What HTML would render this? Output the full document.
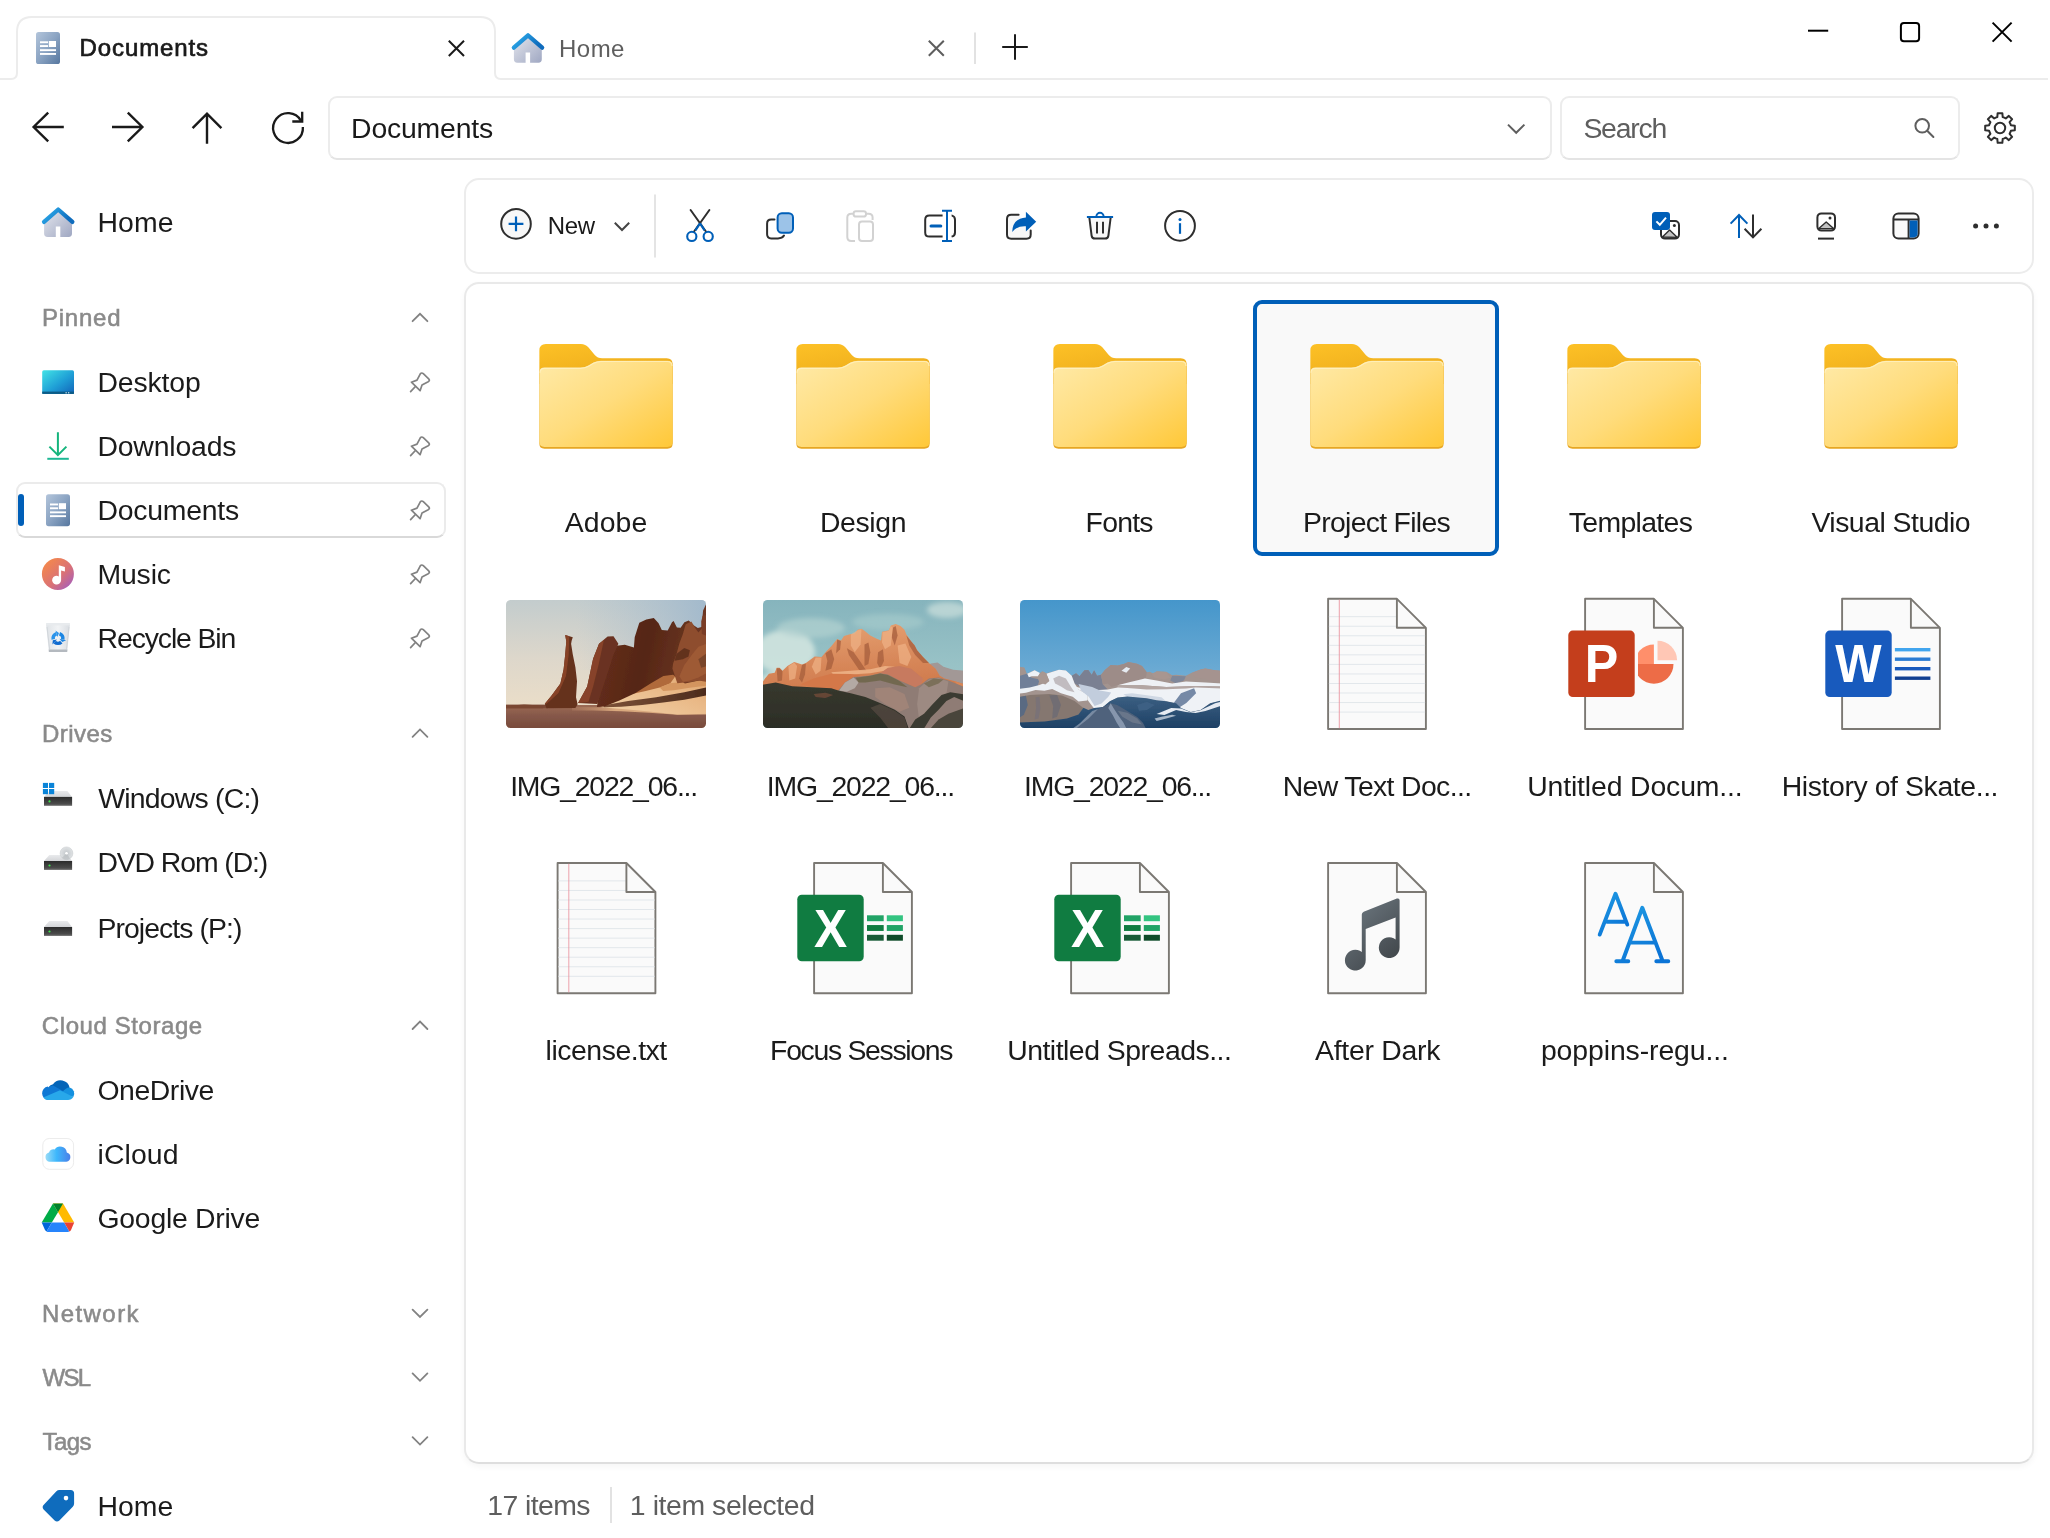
<!DOCTYPE html>
<html lang="en"><head><meta charset="utf-8"><title>Files - Documents</title>
<style>
html,body{margin:0;padding:0;background:#fff;}
body{width:2050px;height:1538px;position:relative;overflow:hidden;font-family:"Liberation Sans", Arial, sans-serif;}
.t{position:absolute;line-height:40px;height:40px;white-space:nowrap;}
.b{position:absolute;box-sizing:border-box;}
svg.ov{position:absolute;left:0;top:0;pointer-events:none;}
</style></head>
<body>
<div class="b" style="left:328px;top:96px;width:1224px;height:64px;border:2px solid #ececec;border-radius:9px;background:#fff;border-bottom-color:#e4e4e4"></div>
<div class="b" style="left:1560px;top:96px;width:400px;height:64px;border:2px solid #ececec;border-radius:9px;background:#fff;border-bottom-color:#e4e4e4"></div>
<div class="b" style="left:464px;top:178px;width:1570px;height:96px;border:2px solid #ececec;border-radius:15px;background:#fff"></div>
<div class="b" style="left:464px;top:282px;width:1570px;height:1182px;border:2px solid #e9e9e9;border-bottom-color:#dedede;border-radius:15px;background:#fff;box-shadow:0 3px 6px rgba(0,0,0,0.04)"></div>
<div class="b" style="left:610px;top:1487px;width:2px;height:36px;background:#e2e2e2"></div>
<div class="b" style="left:16px;top:482px;width:430px;height:56px;border:2px solid #ebebeb;border-bottom-color:#d9d9d9;border-radius:9px;background:#fff"></div>
<div class="b" style="left:18px;top:494px;width:6px;height:32px;border-radius:3px;background:#005fb8"></div>
<div class="b" style="left:1253px;top:300px;width:246px;height:256px;border:4px solid #005fb8;border-radius:9px;background:#f9f9f9"></div>
<svg class="ov" width="2050" height="1538" viewBox="0 0 2050 1538">
<defs>
<linearGradient id="gdoc" x1="0" y1="0" x2="1" y2="1"><stop offset="0" stop-color="#b3c5db"/><stop offset="0.5" stop-color="#8aa3c2"/><stop offset="1" stop-color="#56779f"/></linearGradient>
<linearGradient id="ghroof" x1="0" y1="0" x2="1" y2="0.4"><stop offset="0" stop-color="#2fb0ee"/><stop offset="1" stop-color="#0f6cbd"/></linearGradient>
<linearGradient id="ghbody" x1="0" y1="0" x2="1" y2="1"><stop offset="0" stop-color="#e6e8ee"/><stop offset="1" stop-color="#9fa7c2"/></linearGradient>
<linearGradient id="gdesk" x1="0" y1="0" x2="1" y2="1"><stop offset="0" stop-color="#41e3e6"/><stop offset="0.55" stop-color="#1f9fd6"/><stop offset="1" stop-color="#1263b8"/></linearGradient>
<linearGradient id="gdl" x1="0" y1="0" x2="0" y2="1"><stop offset="0" stop-color="#12b36f"/><stop offset="1" stop-color="#1fb9a0"/></linearGradient>
<linearGradient id="gmus" x1="0.1" y1="0.1" x2="0.9" y2="0.9"><stop offset="0" stop-color="#f5894a"/><stop offset="0.6" stop-color="#d97177"/><stop offset="1" stop-color="#a85fb8"/></linearGradient>
<linearGradient id="gbin" x1="0" y1="0" x2="1" y2="0"><stop offset="0" stop-color="#dfe3e7"/><stop offset="0.5" stop-color="#f1f3f5"/><stop offset="1" stop-color="#d9dde2"/></linearGradient>
<linearGradient id="gdrvf" x1="0" y1="0" x2="0" y2="1"><stop offset="0" stop-color="#2b2b2b"/><stop offset="0.75" stop-color="#4a4a4a"/><stop offset="1" stop-color="#6a6a6a"/></linearGradient>
<linearGradient id="gdrvt" x1="0" y1="0" x2="0" y2="1"><stop offset="0" stop-color="#e9eaec"/><stop offset="1" stop-color="#d3d5d8"/></linearGradient>
<radialGradient id="gdisc"><stop offset="0.12" stop-color="#fff"/><stop offset="0.2" stop-color="#c9cdd0"/><stop offset="1" stop-color="#dfe2e4"/></radialGradient>
<linearGradient id="gicl" x1="0" y1="0.5" x2="1" y2="0.5"><stop offset="0" stop-color="#9adcf7"/><stop offset="0.45" stop-color="#3db7fc"/><stop offset="1" stop-color="#4a7fe8"/></linearGradient>
<linearGradient id="gfb" x1="0" y1="0" x2="0.6" y2="1"><stop offset="0" stop-color="#fdc126"/><stop offset="1" stop-color="#eba91a"/></linearGradient>
<linearGradient id="gff" x1="0" y1="0" x2="1" y2="1"><stop offset="0" stop-color="#ffeaa8"/><stop offset="0.5" stop-color="#ffdc7c"/><stop offset="1" stop-color="#ffc838"/></linearGradient>
<linearGradient id="gfs" x1="0" y1="0" x2="0" y2="1"><stop offset="0" stop-color="#d99a14" stop-opacity="0"/><stop offset="1" stop-color="#d2900e" stop-opacity="0.55"/></linearGradient>
<linearGradient id="gnote" x1="0.2" y1="0" x2="0.9" y2="1"><stop offset="0" stop-color="#6d7880"/><stop offset="1" stop-color="#3d4246"/></linearGradient>
<linearGradient id="gfont" x1="0" y1="0" x2="0.6" y2="1"><stop offset="0" stop-color="#1f9be3"/><stop offset="1" stop-color="#0b74d6"/></linearGradient>
<filter id="bl1" x="-10%" y="-10%" width="120%" height="120%"><feGaussianBlur stdDeviation="0.6"/></filter>
<filter id="bl2" x="-20%" y="-20%" width="140%" height="140%"><feGaussianBlur stdDeviation="2.5"/></filter>
<linearGradient id="p1sky" x1="0" y1="0" x2="0" y2="1"><stop offset="0" stop-color="#c3cccd"/><stop offset="0.45" stop-color="#ddd7cb"/><stop offset="1" stop-color="#f0e0c7"/></linearGradient>
<linearGradient id="p1sky2" x1="0" y1="0" x2="1" y2="0"><stop offset="0.35" stop-color="#a9bfd0" stop-opacity="0"/><stop offset="1" stop-color="#9ab5cc" stop-opacity="0.8"/></linearGradient>
<linearGradient id="p1gr" x1="0" y1="0" x2="0" y2="1"><stop offset="0" stop-color="#9c6b54"/><stop offset="0.4" stop-color="#86584a"/><stop offset="1" stop-color="#754838"/></linearGradient>
<linearGradient id="p1rock" x1="0" y1="0" x2="1" y2="0.2"><stop offset="0" stop-color="#6a311d"/><stop offset="0.5" stop-color="#552616"/><stop offset="1" stop-color="#6e3822"/></linearGradient>
<linearGradient id="p1sand" x1="0" y1="1" x2="1" y2="0"><stop offset="0" stop-color="#f2d3aa"/><stop offset="0.6" stop-color="#e9b886"/><stop offset="1" stop-color="#d99b63"/></linearGradient>
<linearGradient id="p1shadow" x1="0" y1="0" x2="1" y2="0"><stop offset="0" stop-color="#7d5238"/><stop offset="1" stop-color="#4a2a1c"/></linearGradient>
<filter id="nz1" x="0" y="0" width="100%" height="100%"><feTurbulence type="fractalNoise" baseFrequency="0.9" numOctaves="2" seed="3" result="n"/><feColorMatrix in="n" type="matrix" values="0 0 0 0 0.25  0 0 0 0 0.12  0 0 0 0 0.08  0 0 0 1.4 -0.55"/><feComposite operator="in" in2="SourceGraphic"/></filter>
<linearGradient id="p1strip" gradientUnits="userSpaceOnUse" x1="60" y1="0" x2="110" y2="0"><stop offset="0" stop-color="#b88466" stop-opacity="0.2"/><stop offset="1" stop-color="#d9a97e"/></linearGradient>
<clipPath id="cph1"><rect x="0" y="0" width="200" height="128" rx="4.5"/></clipPath>
<linearGradient id="p2sky" x1="0" y1="0" x2="0" y2="1"><stop offset="0" stop-color="#86b4bd"/><stop offset="0.5" stop-color="#98c2c6"/><stop offset="1" stop-color="#a4cacb"/></linearGradient>
<linearGradient id="p2mt" x1="0" y1="0" x2="0.2" y2="1"><stop offset="0" stop-color="#e6a272"/><stop offset="0.55" stop-color="#d98a5c"/><stop offset="1" stop-color="#cf7a4c"/></linearGradient>
<linearGradient id="p2for" x1="0" y1="0" x2="0" y2="1"><stop offset="0" stop-color="#38392e"/><stop offset="1" stop-color="#2b2c26"/></linearGradient>
<clipPath id="cph2"><rect x="0" y="0" width="200" height="128" rx="4.5"/></clipPath>
<linearGradient id="p3sky" x1="0" y1="0" x2="0" y2="1"><stop offset="0" stop-color="#4596cb"/><stop offset="0.55" stop-color="#6baad3"/><stop offset="1" stop-color="#8fc0dc"/></linearGradient>
<linearGradient id="p3low" x1="0" y1="0" x2="0" y2="1"><stop offset="0" stop-color="#3b5f82"/><stop offset="1" stop-color="#1c3f63"/></linearGradient>
<clipPath id="cph3"><rect x="0" y="0" width="200" height="128" rx="4.5"/></clipPath>
</defs>
<path d="M0,79 H11 Q17,79 17,73 V32 Q17,17 32,17 H480 Q495,17 495,32 V73 Q495,79 501,79 H2048" fill="none" stroke="#ececec" stroke-width="2"/>
<g transform="translate(36,32)"><rect x="0" y="0" width="24" height="32" rx="2.6" fill="url(#gdoc)"/><rect x="4" y="9.3" width="8" height="1.9" fill="#fff"/><rect x="4" y="13.1" width="8" height="1.9" fill="#fff"/><rect x="12.8" y="9" width="7.2" height="6" fill="#fff"/><rect x="4" y="17.2" width="16" height="1.9" fill="#fff"/><rect x="4" y="21" width="16" height="1.9" fill="#fff"/></g>
<path d="M448.8,40.8 L464,56 M464,40.8 L448.8,56" stroke="#1a1a1a" stroke-width="2" fill="none"/>
<g transform="translate(512,32.3) scale(1.0)"><path d="M1.9,14 L16,2.6 L29.8,14 V27 Q29.8,30.4 26.4,30.4 H18.1 V20.1 H13.6 V30.4 H5.3 Q1.9,30.4 1.9,27 Z" fill="url(#ghbody)"/><path d="M1.8,15.4 L16,3 L30.2,15.4" fill="none" stroke="url(#ghroof)" stroke-width="4.2" stroke-linecap="round" stroke-linejoin="round"/></g>
<path d="M928.8,40.8 L943.8,55.8 M943.8,40.8 L928.8,55.8" stroke="#5e5e5e" stroke-width="2" fill="none"/>
<rect x="974" y="32.5" width="2" height="31.5" fill="#e2e2e2"/>
<path d="M1002.2,47 H1027.8 M1015,34.2 V59.8" stroke="#1a1a1a" stroke-width="2" fill="none"/>
<path d="M1808,30.7 H1828.2" stroke="#000" stroke-width="2"/>
<rect x="1900.9" y="23" width="18.2" height="18.2" rx="3" fill="none" stroke="#000" stroke-width="2"/>
<path d="M1992.6,22.6 L2011.6,41.6 M2011.6,22.6 L1992.6,41.6" stroke="#000" stroke-width="2" fill="none"/>
<path d="M63.8,127 H33.8 M48.2,112.6 L33.6,127 L48.2,141.4" fill="none" stroke="#1a1a1a" stroke-width="2.4"/>
<path d="M112,127 H142.2 M127.8,112.6 L142.4,127 L127.8,141.4" fill="none" stroke="#1a1a1a" stroke-width="2.4"/>
<path d="M207,143.8 V113.8 M192.6,128.2 L207,113.6 L221.4,128.2" fill="none" stroke="#1a1a1a" stroke-width="2.4"/>
<path d="M302.86,126.96 A14.9,14.9 0 1 1 300.90,120.55" fill="none" stroke="#1a1a1a" stroke-width="2.3"/>
<path d="M302.2,111.8 V121.5 H292.3" fill="none" stroke="#1a1a1a" stroke-width="2.3"/>
<path d="M1508,124.6 L1516.2,132.8 L1524.4,124.6" fill="none" stroke="#5e5e5e" stroke-width="2"/>
<circle cx="1922.2" cy="125.8" r="6.8" fill="none" stroke="#5e5e5e" stroke-width="2"/><path d="M1927.2,130.8 L1933.4,137" stroke="#5e5e5e" stroke-width="2" stroke-linecap="round"/>
<polygon points="1995.71,117.65 1997.29,117.13 1997.65,113.18 2002.35,113.18 2002.71,117.13 2004.29,117.65 2005.77,118.40 2008.82,115.86 2012.14,119.18 2009.60,122.23 2010.35,123.71 2010.87,125.29 2014.82,125.65 2014.82,130.35 2010.87,130.71 2010.35,132.29 2009.60,133.77 2012.14,136.82 2008.82,140.14 2005.77,137.60 2004.29,138.35 2002.71,138.87 2002.35,142.82 1997.65,142.82 1997.29,138.87 1995.71,138.35 1994.23,137.60 1991.18,140.14 1987.86,136.82 1990.40,133.77 1989.65,132.29 1989.13,130.71 1985.18,130.35 1985.18,125.65 1989.13,125.29 1989.65,123.71 1990.40,122.23 1987.86,119.18 1991.18,115.86 1994.23,118.40" fill="none" stroke="#2e2e2e" stroke-width="2" stroke-linejoin="round"/>
<circle cx="2000" cy="128" r="5.2" fill="none" stroke="#2e2e2e" stroke-width="2"/>
<g transform="translate(42.2,206.5) scale(1.0)"><path d="M1.9,14 L16,2.6 L29.8,14 V27 Q29.8,30.4 26.4,30.4 H18.1 V20.1 H13.6 V30.4 H5.3 Q1.9,30.4 1.9,27 Z" fill="url(#ghbody)"/><path d="M1.8,15.4 L16,3 L30.2,15.4" fill="none" stroke="url(#ghroof)" stroke-width="4.2" stroke-linecap="round" stroke-linejoin="round"/></g>
<path d="M412.6,321.2 L420,313.8 L427.4,321.2" fill="none" stroke="#828282" stroke-width="1.8" stroke-linecap="round"/>
<rect x="42.2" y="370.3" width="31.8" height="23.6" rx="1.6" fill="url(#gdesk)"/><rect x="42.2" y="391.6" width="31.8" height="2.3" fill="#0d5b86"/><rect x="65.5" y="392.2" width="1.3" height="1.2" fill="#cfe8f5"/><rect x="68" y="392.2" width="1.3" height="1.2" fill="#cfe8f5"/>
<g transform="translate(410,372.3)" fill="none" stroke="#828282" stroke-width="1.7" stroke-linejoin="round" stroke-linecap="round"><path d="M10.3,1.6 Q11.7,-0.1 13.3,1.4 L18.7,6.6 Q20.3,8.3 18.2,9.5 L12,12.6 L10.1,18.4 L1.4,9.9 L7,7.8 Z"/><path d="M5.4,14.2 L0.6,19.4"/></g>
<path d="M57.9,432.2 V455 M49.4,446.6 L57.9,455.1 L66.4,446.6" fill="none" stroke="#14b47c" stroke-width="2"/><path d="M47.3,458.8 H68.8" stroke="#1db894" stroke-width="2"/>
<g transform="translate(410,436.3)" fill="none" stroke="#828282" stroke-width="1.7" stroke-linejoin="round" stroke-linecap="round"><path d="M10.3,1.6 Q11.7,-0.1 13.3,1.4 L18.7,6.6 Q20.3,8.3 18.2,9.5 L12,12.6 L10.1,18.4 L1.4,9.9 L7,7.8 Z"/><path d="M5.4,14.2 L0.6,19.4"/></g>
<g transform="translate(46,494.2)"><rect x="0" y="0" width="24" height="32" rx="2.6" fill="url(#gdoc)"/><rect x="4" y="9.3" width="8" height="1.9" fill="#fff"/><rect x="4" y="13.1" width="8" height="1.9" fill="#fff"/><rect x="12.8" y="9" width="7.2" height="6" fill="#fff"/><rect x="4" y="17.2" width="16" height="1.9" fill="#fff"/><rect x="4" y="21" width="16" height="1.9" fill="#fff"/></g>
<g transform="translate(410,500.3)" fill="none" stroke="#828282" stroke-width="1.7" stroke-linejoin="round" stroke-linecap="round"><path d="M10.3,1.6 Q11.7,-0.1 13.3,1.4 L18.7,6.6 Q20.3,8.3 18.2,9.5 L12,12.6 L10.1,18.4 L1.4,9.9 L7,7.8 Z"/><path d="M5.4,14.2 L0.6,19.4"/></g>
<circle cx="57.9" cy="574" r="16" fill="url(#gmus)"/><path d="M58.8,565.2 L64.9,567 V571.6 L61.1,570.5 V580.2 A4.5,4.3 0 1 1 58.8,576.4 Z" fill="#fff"/>
<g transform="translate(410,564.3)" fill="none" stroke="#828282" stroke-width="1.7" stroke-linejoin="round" stroke-linecap="round"><path d="M10.3,1.6 Q11.7,-0.1 13.3,1.4 L18.7,6.6 Q20.3,8.3 18.2,9.5 L12,12.6 L10.1,18.4 L1.4,9.9 L7,7.8 Z"/><path d="M5.4,14.2 L0.6,19.4"/></g>
<path d="M46.1,624.4 H69.9 L67.2,651.8 H48.9 Z" fill="url(#gbin)"/><path d="M46.1,623 H69.9 V625.4 H46.1 Z" fill="#e8ebee"/><path d="M48.7,649.4 H67.4 L67.2,651.9 H48.9 Z" fill="#b4b9bf"/><path d="M47,627 L49.6,649 M69,627 L66.5,649" stroke="#cdd2d7" stroke-width="0.8" fill="none"/>
<path d="M59.51,633.74 A4.9,4.9 0 0 1 62.79,639.42" fill="none" stroke="#1b86e3" stroke-width="3.6"/><polygon points="62.25,641.96 66.12,640.13 59.47,638.71" fill="#1b86e3"/><path d="M61.28,642.04 A4.9,4.9 0 0 1 54.72,642.04" fill="none" stroke="#0f6bd0" stroke-width="3.6"/><polygon points="52.79,640.30 52.45,644.57 57.00,639.51" fill="#0f6bd0"/><path d="M53.21,639.42 A4.9,4.9 0 0 1 56.49,633.74" fill="none" stroke="#2a93ea" stroke-width="3.6"/><polygon points="58.96,632.94 55.44,630.51 57.54,636.97" fill="#2a93ea"/>
<g transform="translate(410,628.3)" fill="none" stroke="#828282" stroke-width="1.7" stroke-linejoin="round" stroke-linecap="round"><path d="M10.3,1.6 Q11.7,-0.1 13.3,1.4 L18.7,6.6 Q20.3,8.3 18.2,9.5 L12,12.6 L10.1,18.4 L1.4,9.9 L7,7.8 Z"/><path d="M5.4,14.2 L0.6,19.4"/></g>
<path d="M412.6,736.8 L420,729.4 L427.4,736.8" fill="none" stroke="#828282" stroke-width="1.8" stroke-linecap="round"/>
<path d="M49.3,791.0 H67.4 L72.1,796.9 H44 Z" fill="url(#gdrvt)"/><rect x="44" y="796.9" width="28.1" height="8.9" fill="url(#gdrvf)"/><circle cx="49.5" cy="801.4" r="1.1" fill="#3ee04a"/>
<g fill="#0a84d8"><rect x="42.9" y="782.9" width="5.1" height="5.1"/><rect x="49" y="782.9" width="5.2" height="5.1"/><rect x="42.9" y="789" width="5.1" height="5.2"/><rect x="49" y="789" width="5.2" height="5.2"/></g>
<path d="M49.3,855.1 H67.4 L72.1,861 H44 Z" fill="url(#gdrvt)"/><rect x="44" y="861" width="28.1" height="8.9" fill="url(#gdrvf)"/><circle cx="49.5" cy="865.5" r="1.1" fill="#3ee04a"/>
<circle cx="66.5" cy="853.3" r="6.4" fill="url(#gdisc)" stroke="#c4c8cb" stroke-width="0.5"/><path d="M66.5,853.3 L70,858.6 A6.4,6.4 0 0 1 62,857.8 Z" fill="#b9bdc0" opacity="0.7"/><circle cx="66.5" cy="853.3" r="1.3" fill="#fff"/>
<path d="M49.3,921.1 H67.4 L72.1,927 H44 Z" fill="url(#gdrvt)"/><rect x="44" y="927" width="28.1" height="8.9" fill="url(#gdrvf)"/><circle cx="49.5" cy="931.5" r="1.1" fill="#3ee04a"/>
<path d="M412.6,1029.0 L420,1021.6 L427.4,1029.0" fill="none" stroke="#828282" stroke-width="1.8" stroke-linecap="round"/>
<g><path d="M53,1084.2 A9.3,9.3 0 0 1 69.6,1087.6 L60,1093.5 L48.6,1087.2 A7,7 0 0 1 53,1084.2 Z" fill="#0364b8"/><path d="M48.6,1087.2 A7.2,7.2 0 0 1 53.2,1085.6 L66.5,1093 L52.5,1100 H48.5 A6.8,6.8 0 0 1 47.8,1086.5 Z" fill="#0f78d4"/><path d="M69.6,1087.6 A6.3,6.3 0 0 1 73.3,1097 L60,1093.5 L66.2,1088.4 A6,6 0 0 1 69.6,1087.6 Z" fill="#1490df"/><path d="M73.3,1097 A6.2,6.2 0 0 1 68,1100 H48.5 A6.8,6.8 0 0 1 43.2,1097.4 L60,1090.2 Z" fill="#28a8ea"/></g>
<rect x="42.8" y="1138.5" width="30.8" height="30.8" rx="6.5" fill="#fff" stroke="#ececec" stroke-width="1"/><path d="M49.8,1161.8 A4.8,4.8 0 0 1 49,1152.4 A4.4,4.4 0 0 1 54.6,1149.6 A6.6,6.6 0 0 1 66.8,1152.6 A4.7,4.7 0 0 1 66.4,1161.8 Z" fill="url(#gicl)"/>
<g><path d="M53,1203.6 H63 L74.2,1222.6 H64.2 Z" fill="#ffba00"/><path d="M53,1203.6 L58,1212.2 L51.8,1222.6 H41.7 Z" fill="#00ac47"/><path d="M53,1203.6 H63 L58,1212.2 Z" fill="#00832d"/><path d="M41.7,1222.6 H51.8 L46.6,1231.4 Q45.6,1231 45,1230 Z" fill="#0066da"/><path d="M51.8,1222.6 H64.2 L69.4,1231.6 Q68.6,1232 67.6,1232 H48.4 Q47.4,1232 46.6,1231.4 Z" fill="#2684fc"/><path d="M64.2,1222.6 H74.2 L71,1230 Q70.4,1231 69.4,1231.6 Z" fill="#ea4335"/></g>
<path d="M412.6,1309.6 L420,1317.0 L427.4,1309.6" fill="none" stroke="#828282" stroke-width="1.8" stroke-linecap="round"/>
<path d="M412.6,1373.4 L420,1380.8 L427.4,1373.4" fill="none" stroke="#828282" stroke-width="1.8" stroke-linecap="round"/>
<path d="M412.6,1437.2 L420,1444.6 L427.4,1437.2" fill="none" stroke="#828282" stroke-width="1.8" stroke-linecap="round"/>
<path d="M59.4,1490 H70.6 Q74.1,1490 74.1,1493.5 V1503.6 Q74.1,1505.4 72.8,1506.7 L59.4,1520.4 Q57,1522.6 54.6,1520.4 L43.6,1509.4 Q41.6,1507 43.8,1504.8 L56.4,1491.3 Q57.6,1490 59.4,1490 Z" fill="#0f6cbd"/><circle cx="66" cy="1498.1" r="2.3" fill="#fff"/>
<circle cx="516" cy="223.9" r="14.8" fill="#f8f8f8" stroke="#2e2e2e" stroke-width="2"/><path d="M508.6,223.9 H523.4 M516,216.5 V231.3" stroke="#005fb8" stroke-width="2.2" fill="none"/>
<path d="M614.8,222.8 L622,230 L629.2,222.8" fill="none" stroke="#444" stroke-width="2"/>
<rect x="654" y="194.5" width="2" height="63" fill="#e4e4e4"/>
<path d="M690.6,210 L707,233 M709.4,210 L693,233" stroke="#2e2e2e" stroke-width="2" fill="none" stroke-linecap="round"/><path d="M700,223.4 L704.6,230.4 M700,223.4 L695.4,230.4" stroke="#005fb8" stroke-width="2.2" fill="none"/><circle cx="691.8" cy="236.4" r="4.6" fill="#fff" stroke="#005fb8" stroke-width="2.1"/><circle cx="708.2" cy="236.4" r="4.6" fill="#fff" stroke="#005fb8" stroke-width="2.1"/>
<path d="M774.5,219.6 H771.2 Q767.1,219.6 767.1,223.7 V234.3 Q767.1,238.4 771.2,238.4 H778 Q782.4,238.4 784,235.6" fill="none" stroke="#2e2e2e" stroke-width="2" stroke-linecap="round"/><rect x="777.6" y="213.3" width="15.4" height="19.4" rx="4.2" fill="#9cc3e8" stroke="#005fb8" stroke-width="2"/>
<g fill="none" stroke="#d2d2d2" stroke-width="2" stroke-linejoin="round"><path d="M855,241 H851.3 Q847.3,241 847.3,237 V217.6 Q847.3,213.8 851.3,213.8 H853.4 M866,213.8 H868.6 Q872.6,213.8 872.6,217.6 V220"/><rect x="853.6" y="211.2" width="12.4" height="5.4" rx="2.4"/><rect x="859" y="221.6" width="14" height="19.4" rx="3"/></g>
<path d="M942.6,215.6 H929.4 Q925.2,215.6 925.2,219.8 V232.4 Q925.2,236.6 929.4,236.6 H942.6 M951.6,215.6 H952 Q955,216.4 955,219.8 V232.4 Q955,235.8 951.6,236.6" fill="none" stroke="#2e2e2e" stroke-width="2"/><path d="M947,210.7 V241 M942,210.7 H952 M942,241 H952" stroke="#005fb8" stroke-width="2" fill="none"/><path d="M931,226.1 H940.8" stroke="#005fb8" stroke-width="3" stroke-linecap="round"/>
<path d="M1018.6,214.8 H1011.2 Q1007,214.8 1007,219 V234.5 Q1007,238.7 1011.2,238.7 H1026.5 Q1030.7,238.7 1030.7,234.5 V230.5" fill="#f7f7f7" stroke="#2e2e2e" stroke-width="2" stroke-linecap="round"/><path d="M1025.9,211.8 L1036.2,221.7 L1025.9,231.6 V226.2 Q1017,225.6 1012.2,232 Q1012.6,218.4 1025.9,217.4 Z" fill="#005fb8"/>
<path d="M1086.9,217 H1113.1" stroke="#005fb8" stroke-width="2" fill="none"/><path d="M1096.4,216.4 A3.6,3.6 0 0 1 1103.6,216.4" stroke="#005fb8" stroke-width="2" fill="none"/><path d="M1089.4,218 L1091.6,235.6 Q1092,238.6 1095,238.6 H1105 Q1108,238.6 1108.4,235.6 L1110.6,218" fill="#f7f7f7" stroke="#2e2e2e" stroke-width="2"/><path d="M1097,221.8 V233.6 M1103,221.8 V233.6" stroke="#2e2e2e" stroke-width="2" fill="none"/>
<circle cx="1180" cy="225.8" r="14.9" fill="none" stroke="#2e2e2e" stroke-width="2"/><circle cx="1180" cy="219.4" r="1.5" fill="#005fb8"/><path d="M1180,223.2 V233.8" stroke="#005fb8" stroke-width="2.2"/>
<rect x="1661" y="221" width="18" height="17.6" rx="4" fill="#fff" stroke="#2e2e2e" stroke-width="2"/><path d="M1662.4,237 L1669.6,230 L1677.4,237.4 Z" fill="#c2c2c2" stroke="#2e2e2e" stroke-width="1.4" stroke-linejoin="round"/><circle cx="1674.4" cy="225.6" r="1.5" fill="#2e2e2e"/><rect x="1652" y="212" width="18" height="18" rx="3" fill="#005fb8"/><path d="M1656.4,221.4 L1659.8,224.8 L1666,217.6" fill="none" stroke="#fff" stroke-width="2"/>
<path d="M1739,238 V215.4 M1730.6,223.6 L1739,215 L1747.4,223.6" fill="none" stroke="#005fb8" stroke-width="2"/><path d="M1753,214.4 V237 M1744.6,228.8 L1753,237.4 L1761.4,228.8" fill="none" stroke="#2e2e2e" stroke-width="2"/>
<rect x="1817.4" y="213.4" width="17.6" height="17.2" rx="4" fill="#fff" stroke="#2e2e2e" stroke-width="2"/><path d="M1818.8,228.6 L1826.2,222 L1833.6,228.6 Z" fill="#c2c2c2" stroke="#2e2e2e" stroke-width="1.4" stroke-linejoin="round"/><circle cx="1830" cy="218" r="1.5" fill="#2e2e2e"/><path d="M1818,238.6 H1834" stroke="#2e2e2e" stroke-width="2"/>
<rect x="1893.4" y="213.4" width="25.2" height="25" rx="5" fill="#fafafa" stroke="#2e2e2e" stroke-width="2"/><path d="M1893.4,219.4 H1918.6 M1908.6,219.4 V238.4" stroke="#2e2e2e" stroke-width="2" fill="none"/><path d="M1909.6,220.4 H1917.6 V233.6 Q1917.6,237.4 1913.8,237.4 H1909.6 Z" fill="#005fb8"/>
<circle cx="1975.6" cy="226" r="2.5" fill="#2e2e2e"/><circle cx="1986" cy="226" r="2.5" fill="#2e2e2e"/><circle cx="1996.4" cy="226" r="2.5" fill="#2e2e2e"/>
<g transform="translate(539.35,343.9)"><path d="M0,40 V6.5 Q0,0 6.5,0 H41.5 Q46.2,0 49.2,3.6 L55.2,10.8 Q58.2,14.3 62.8,14.3 H127.3 Q133.3,14.3 133.3,20.3 V40 Z" fill="url(#gfb)"/><path d="M0,16 H46 L58,10 H133.3 V22 H0 Z" fill="url(#gfs)" opacity="0.0"/><path d="M0,104.8 V28.9 Q0,23.7 5.2,23.7 H41 Q45.6,23.7 49.4,21.4 L54.2,18.6 Q57.6,16.9 61.6,16.9 H128 Q133.3,16.9 133.3,22.2 V99.6 Q133.3,104.8 128,104.8 H5.2 Q0,104.8 0,99.6 Z" fill="#e6a623"/><path d="M0,103.0 V28.9 Q0,23.7 5.2,23.7 H41 Q45.6,23.7 49.4,21.4 L54.2,18.6 Q57.6,16.9 61.6,16.9 H128 Q133.3,16.9 133.3,22.2 V97.8 Q133.3,103.0 128,103.0 H5.2 Q0,103.0 0,97.8 Z" fill="url(#gff)"/><path d="M0.6,28.9 Q0.6,24.4 5.2,24.4 H41 Q45.8,24.4 49.7,22 L54.5,19.2 Q57.8,17.6 61.6,17.6 H128 Q132.7,17.6 132.7,22.2" fill="none" stroke="#fff3c9" stroke-width="1.2" opacity="0.7"/></g>
<g transform="translate(796.35,343.9)"><path d="M0,40 V6.5 Q0,0 6.5,0 H41.5 Q46.2,0 49.2,3.6 L55.2,10.8 Q58.2,14.3 62.8,14.3 H127.3 Q133.3,14.3 133.3,20.3 V40 Z" fill="url(#gfb)"/><path d="M0,16 H46 L58,10 H133.3 V22 H0 Z" fill="url(#gfs)" opacity="0.0"/><path d="M0,104.8 V28.9 Q0,23.7 5.2,23.7 H41 Q45.6,23.7 49.4,21.4 L54.2,18.6 Q57.6,16.9 61.6,16.9 H128 Q133.3,16.9 133.3,22.2 V99.6 Q133.3,104.8 128,104.8 H5.2 Q0,104.8 0,99.6 Z" fill="#e6a623"/><path d="M0,103.0 V28.9 Q0,23.7 5.2,23.7 H41 Q45.6,23.7 49.4,21.4 L54.2,18.6 Q57.6,16.9 61.6,16.9 H128 Q133.3,16.9 133.3,22.2 V97.8 Q133.3,103.0 128,103.0 H5.2 Q0,103.0 0,97.8 Z" fill="url(#gff)"/><path d="M0.6,28.9 Q0.6,24.4 5.2,24.4 H41 Q45.8,24.4 49.7,22 L54.5,19.2 Q57.8,17.6 61.6,17.6 H128 Q132.7,17.6 132.7,22.2" fill="none" stroke="#fff3c9" stroke-width="1.2" opacity="0.7"/></g>
<g transform="translate(1053.35,343.9)"><path d="M0,40 V6.5 Q0,0 6.5,0 H41.5 Q46.2,0 49.2,3.6 L55.2,10.8 Q58.2,14.3 62.8,14.3 H127.3 Q133.3,14.3 133.3,20.3 V40 Z" fill="url(#gfb)"/><path d="M0,16 H46 L58,10 H133.3 V22 H0 Z" fill="url(#gfs)" opacity="0.0"/><path d="M0,104.8 V28.9 Q0,23.7 5.2,23.7 H41 Q45.6,23.7 49.4,21.4 L54.2,18.6 Q57.6,16.9 61.6,16.9 H128 Q133.3,16.9 133.3,22.2 V99.6 Q133.3,104.8 128,104.8 H5.2 Q0,104.8 0,99.6 Z" fill="#e6a623"/><path d="M0,103.0 V28.9 Q0,23.7 5.2,23.7 H41 Q45.6,23.7 49.4,21.4 L54.2,18.6 Q57.6,16.9 61.6,16.9 H128 Q133.3,16.9 133.3,22.2 V97.8 Q133.3,103.0 128,103.0 H5.2 Q0,103.0 0,97.8 Z" fill="url(#gff)"/><path d="M0.6,28.9 Q0.6,24.4 5.2,24.4 H41 Q45.8,24.4 49.7,22 L54.5,19.2 Q57.8,17.6 61.6,17.6 H128 Q132.7,17.6 132.7,22.2" fill="none" stroke="#fff3c9" stroke-width="1.2" opacity="0.7"/></g>
<g transform="translate(1310.35,343.9)"><path d="M0,40 V6.5 Q0,0 6.5,0 H41.5 Q46.2,0 49.2,3.6 L55.2,10.8 Q58.2,14.3 62.8,14.3 H127.3 Q133.3,14.3 133.3,20.3 V40 Z" fill="url(#gfb)"/><path d="M0,16 H46 L58,10 H133.3 V22 H0 Z" fill="url(#gfs)" opacity="0.0"/><path d="M0,104.8 V28.9 Q0,23.7 5.2,23.7 H41 Q45.6,23.7 49.4,21.4 L54.2,18.6 Q57.6,16.9 61.6,16.9 H128 Q133.3,16.9 133.3,22.2 V99.6 Q133.3,104.8 128,104.8 H5.2 Q0,104.8 0,99.6 Z" fill="#e6a623"/><path d="M0,103.0 V28.9 Q0,23.7 5.2,23.7 H41 Q45.6,23.7 49.4,21.4 L54.2,18.6 Q57.6,16.9 61.6,16.9 H128 Q133.3,16.9 133.3,22.2 V97.8 Q133.3,103.0 128,103.0 H5.2 Q0,103.0 0,97.8 Z" fill="url(#gff)"/><path d="M0.6,28.9 Q0.6,24.4 5.2,24.4 H41 Q45.8,24.4 49.7,22 L54.5,19.2 Q57.8,17.6 61.6,17.6 H128 Q132.7,17.6 132.7,22.2" fill="none" stroke="#fff3c9" stroke-width="1.2" opacity="0.7"/></g>
<g transform="translate(1567.35,343.9)"><path d="M0,40 V6.5 Q0,0 6.5,0 H41.5 Q46.2,0 49.2,3.6 L55.2,10.8 Q58.2,14.3 62.8,14.3 H127.3 Q133.3,14.3 133.3,20.3 V40 Z" fill="url(#gfb)"/><path d="M0,16 H46 L58,10 H133.3 V22 H0 Z" fill="url(#gfs)" opacity="0.0"/><path d="M0,104.8 V28.9 Q0,23.7 5.2,23.7 H41 Q45.6,23.7 49.4,21.4 L54.2,18.6 Q57.6,16.9 61.6,16.9 H128 Q133.3,16.9 133.3,22.2 V99.6 Q133.3,104.8 128,104.8 H5.2 Q0,104.8 0,99.6 Z" fill="#e6a623"/><path d="M0,103.0 V28.9 Q0,23.7 5.2,23.7 H41 Q45.6,23.7 49.4,21.4 L54.2,18.6 Q57.6,16.9 61.6,16.9 H128 Q133.3,16.9 133.3,22.2 V97.8 Q133.3,103.0 128,103.0 H5.2 Q0,103.0 0,97.8 Z" fill="url(#gff)"/><path d="M0.6,28.9 Q0.6,24.4 5.2,24.4 H41 Q45.8,24.4 49.7,22 L54.5,19.2 Q57.8,17.6 61.6,17.6 H128 Q132.7,17.6 132.7,22.2" fill="none" stroke="#fff3c9" stroke-width="1.2" opacity="0.7"/></g>
<g transform="translate(1824.35,343.9)"><path d="M0,40 V6.5 Q0,0 6.5,0 H41.5 Q46.2,0 49.2,3.6 L55.2,10.8 Q58.2,14.3 62.8,14.3 H127.3 Q133.3,14.3 133.3,20.3 V40 Z" fill="url(#gfb)"/><path d="M0,16 H46 L58,10 H133.3 V22 H0 Z" fill="url(#gfs)" opacity="0.0"/><path d="M0,104.8 V28.9 Q0,23.7 5.2,23.7 H41 Q45.6,23.7 49.4,21.4 L54.2,18.6 Q57.6,16.9 61.6,16.9 H128 Q133.3,16.9 133.3,22.2 V99.6 Q133.3,104.8 128,104.8 H5.2 Q0,104.8 0,99.6 Z" fill="#e6a623"/><path d="M0,103.0 V28.9 Q0,23.7 5.2,23.7 H41 Q45.6,23.7 49.4,21.4 L54.2,18.6 Q57.6,16.9 61.6,16.9 H128 Q133.3,16.9 133.3,22.2 V97.8 Q133.3,103.0 128,103.0 H5.2 Q0,103.0 0,97.8 Z" fill="url(#gff)"/><path d="M0.6,28.9 Q0.6,24.4 5.2,24.4 H41 Q45.8,24.4 49.7,22 L54.5,19.2 Q57.8,17.6 61.6,17.6 H128 Q132.7,17.6 132.7,22.2" fill="none" stroke="#fff3c9" stroke-width="1.2" opacity="0.7"/></g>
<g transform="translate(1327.3,598.0)"><path d="M0.8,0.8 H69.6 L98.6,29.8 V131 H0.8 Z" fill="#fafafa" stroke="#7b7873" stroke-width="1.9" stroke-linejoin="round"/><path d="M1.6,18.70 H68.8" stroke="#e2e7eb" stroke-width="1"/><path d="M1.6,28.24 H68.8" stroke="#e2e7eb" stroke-width="1"/><path d="M1.6,37.78 H97.8" stroke="#e2e7eb" stroke-width="1"/><path d="M1.6,47.32 H97.8" stroke="#e2e7eb" stroke-width="1"/><path d="M1.6,56.86 H97.8" stroke="#e2e7eb" stroke-width="1"/><path d="M1.6,66.40 H97.8" stroke="#e2e7eb" stroke-width="1"/><path d="M1.6,75.94 H97.8" stroke="#e2e7eb" stroke-width="1"/><path d="M1.6,85.48 H97.8" stroke="#e2e7eb" stroke-width="1"/><path d="M1.6,95.02 H97.8" stroke="#e2e7eb" stroke-width="1"/><path d="M1.6,104.56 H97.8" stroke="#e2e7eb" stroke-width="1"/><path d="M1.6,114.10 H97.8" stroke="#e2e7eb" stroke-width="1"/><path d="M12,1.6 V130.2" stroke="#ea8b98" stroke-width="0.8"/><path d="M69.6,0.8 V29.8 H98.6" fill="none" stroke="#7b7873" stroke-width="1.9" stroke-linejoin="round"/></g>
<g transform="translate(1584.3,598.0)"><path d="M0.8,0.8 H69.6 L98.6,29.8 V131 H0.8 Z" fill="#fafafa" stroke="#7b7873" stroke-width="1.9" stroke-linejoin="round"/><path d="M69.6,0.8 V29.8 H98.6" fill="none" stroke="#7b7873" stroke-width="1.9" stroke-linejoin="round"/></g>
<clipPath id="cpp"><rect x="1638" y="600" width="45" height="128"/></clipPath>
<g clip-path="url(#cpp)"><path d="M1634.3000000000002,664.1 A19.6,19.6 0 0 0 1673.5,664.1 Z" fill="#ed6c47"/><path d="M1634.3000000000002,664.1 A19.6,19.6 0 0 1 1653.9,644.5 V664.1 Z" fill="#ff8f6b"/><path d="M1657.5,640.7 A19.6,19.6 0 0 1 1677.1000000000001,660.3000000000001 H1657.5 Z" fill="#ffc7b5"/></g>
<rect x="1568.3" y="630.6" width="66.4" height="66.4" rx="4.5" fill="#c43e1c"/>
<text x="1601.5" y="682.3000000000001" font-family="Liberation Sans, Arial, sans-serif" font-weight="700" font-size="53.2" fill="#fff" text-anchor="middle" textLength="33.5" lengthAdjust="spacingAndGlyphs">P</text>
<g transform="translate(1841.3,598.0)"><path d="M0.8,0.8 H69.6 L98.6,29.8 V131 H0.8 Z" fill="#fafafa" stroke="#7b7873" stroke-width="1.9" stroke-linejoin="round"/><path d="M69.6,0.8 V29.8 H98.6" fill="none" stroke="#7b7873" stroke-width="1.9" stroke-linejoin="round"/></g>
<rect x="1894.9" y="648.0" width="35.5" height="3.4" fill="#41a5ee"/>
<rect x="1894.9" y="657.5" width="35.5" height="3.4" fill="#2b7cd3"/>
<rect x="1894.9" y="667.0" width="35.5" height="3.4" fill="#185abd"/>
<rect x="1894.9" y="676.5" width="35.5" height="3.4" fill="#103f91"/>
<rect x="1825.3" y="630.6" width="66.4" height="66.4" rx="4.5" fill="#185abd"/>
<text x="1858.5" y="682.3000000000001" font-family="Liberation Sans, Arial, sans-serif" font-weight="700" font-size="53.2" fill="#fff" text-anchor="middle" textLength="46.4" lengthAdjust="spacingAndGlyphs">W</text>
<g transform="translate(556.8,862.2)"><path d="M0.8,0.8 H69.6 L98.6,29.8 V131 H0.8 Z" fill="#fafafa" stroke="#7b7873" stroke-width="1.9" stroke-linejoin="round"/><path d="M1.6,18.70 H68.8" stroke="#e2e7eb" stroke-width="1"/><path d="M1.6,28.24 H68.8" stroke="#e2e7eb" stroke-width="1"/><path d="M1.6,37.78 H97.8" stroke="#e2e7eb" stroke-width="1"/><path d="M1.6,47.32 H97.8" stroke="#e2e7eb" stroke-width="1"/><path d="M1.6,56.86 H97.8" stroke="#e2e7eb" stroke-width="1"/><path d="M1.6,66.40 H97.8" stroke="#e2e7eb" stroke-width="1"/><path d="M1.6,75.94 H97.8" stroke="#e2e7eb" stroke-width="1"/><path d="M1.6,85.48 H97.8" stroke="#e2e7eb" stroke-width="1"/><path d="M1.6,95.02 H97.8" stroke="#e2e7eb" stroke-width="1"/><path d="M1.6,104.56 H97.8" stroke="#e2e7eb" stroke-width="1"/><path d="M1.6,114.10 H97.8" stroke="#e2e7eb" stroke-width="1"/><path d="M12,1.6 V130.2" stroke="#ea8b98" stroke-width="0.8"/><path d="M69.6,0.8 V29.8 H98.6" fill="none" stroke="#7b7873" stroke-width="1.9" stroke-linejoin="round"/></g>
<g transform="translate(813.3,862.2)"><path d="M0.8,0.8 H69.6 L98.6,29.8 V131 H0.8 Z" fill="#fafafa" stroke="#7b7873" stroke-width="1.9" stroke-linejoin="round"/><path d="M69.6,0.8 V29.8 H98.6" fill="none" stroke="#7b7873" stroke-width="1.9" stroke-linejoin="round"/></g>
<rect x="867" y="915.30" width="16.7" height="5.9" fill="#21a366"/><rect x="886.8" y="915.30" width="16.1" height="5.9" fill="#33c481"/>
<rect x="867" y="925.05" width="16.7" height="5.9" fill="#107c41"/><rect x="886.8" y="925.05" width="16.1" height="5.9" fill="#21a366"/>
<rect x="867" y="934.80" width="16.7" height="5.9" fill="#185c37"/><rect x="886.8" y="934.80" width="16.1" height="5.9" fill="#0e4b29"/>
<rect x="797.3" y="894.8000000000001" width="66.4" height="66.4" rx="4.5" fill="#107c41"/>
<text x="830.5" y="946.5000000000001" font-family="Liberation Sans, Arial, sans-serif" font-weight="700" font-size="53.2" fill="#fff" text-anchor="middle" textLength="33.2" lengthAdjust="spacingAndGlyphs">X</text>
<g transform="translate(1070.3,862.2)"><path d="M0.8,0.8 H69.6 L98.6,29.8 V131 H0.8 Z" fill="#fafafa" stroke="#7b7873" stroke-width="1.9" stroke-linejoin="round"/><path d="M69.6,0.8 V29.8 H98.6" fill="none" stroke="#7b7873" stroke-width="1.9" stroke-linejoin="round"/></g>
<rect x="1124" y="915.30" width="16.7" height="5.9" fill="#21a366"/><rect x="1143.8" y="915.30" width="16.1" height="5.9" fill="#33c481"/>
<rect x="1124" y="925.05" width="16.7" height="5.9" fill="#107c41"/><rect x="1143.8" y="925.05" width="16.1" height="5.9" fill="#21a366"/>
<rect x="1124" y="934.80" width="16.7" height="5.9" fill="#185c37"/><rect x="1143.8" y="934.80" width="16.1" height="5.9" fill="#0e4b29"/>
<rect x="1054.3" y="894.8000000000001" width="66.4" height="66.4" rx="4.5" fill="#107c41"/>
<text x="1087.5" y="946.5000000000001" font-family="Liberation Sans, Arial, sans-serif" font-weight="700" font-size="53.2" fill="#fff" text-anchor="middle" textLength="33.2" lengthAdjust="spacingAndGlyphs">X</text>
<g transform="translate(1327.3,862.2)"><path d="M0.8,0.8 H69.6 L98.6,29.8 V131 H0.8 Z" fill="#fafafa" stroke="#7b7873" stroke-width="1.9" stroke-linejoin="round"/><path d="M69.6,0.8 V29.8 H98.6" fill="none" stroke="#7b7873" stroke-width="1.9" stroke-linejoin="round"/></g>
<g transform="translate(1327.3,862.2)" fill="url(#gnote)"><path d="M34.5,52.4 Q34.5,50.3 36.4,49.5 L69.6,36.4 Q72.3,35.6 72.3,38.4 V85.3 A10.4,10.4 0 1 1 68.3,77.2 V55.3 L38.4,66.9 V98 A10.4,10.4 0 1 1 34.5,89.9 Z"/></g>
<g transform="translate(1584.3,862.2)"><path d="M0.8,0.8 H69.6 L98.6,29.8 V131 H0.8 Z" fill="#fafafa" stroke="#7b7873" stroke-width="1.9" stroke-linejoin="round"/><path d="M69.6,0.8 V29.8 H98.6" fill="none" stroke="#7b7873" stroke-width="1.9" stroke-linejoin="round"/></g>
<g transform="translate(1584.3,862.2)" fill="none" stroke="url(#gfont)" stroke-width="3.9" stroke-linecap="round" stroke-linejoin="round"><path d="M15.4,72.4 L31.2,31.6 L43,62.4 M22.6,59.6 H41.6"/><path d="M38.2,99 L58,45.6 L78.4,99 M46.8,80.4 H69.2 M32,99 H44 M72,99 H84"/></g>
<g transform="translate(506,600)" clip-path="url(#cph1)"><rect width="200" height="128" fill="url(#p1sky)"/><rect width="200" height="70" fill="url(#p1sky2)"/><g filter="url(#bl1)"><rect x="-2" y="105" width="204" height="26" fill="url(#p1gr)"/><polygon points="66.0,107.1 108.1,107.4 143.2,107.8 200.0,107.8 200.0,114.5 171.3,114.8 143.2,112.7 115.1,111.3 87.0,110.6 66.0,110.6" fill="url(#p1strip)"/><rect x="0" y="104.6" width="42" height="3.6" fill="#7b4936"/><polygon points="94.0,107.1 122.1,95.5 136.2,87.4 150.2,76.2 166.4,68.5 178.3,76.2 200.0,73.4 203.6,73.4 203.6,113.8 171.3,114.5 143.2,111.6 122.1,109.5 97.6,107.6" fill="url(#p1sand)"/><polygon points="123.5,94.6 136.2,87.4 150.2,76.2 166.4,68.5 171.3,73.4 164.3,83.2 153.7,87.4 139.7,90.9" fill="#b06a3a"/><polygon points="153.7,87.4 164.3,83.2 178.3,81.8 200.0,80.4 203.6,80.4 203.6,85.3 185.3,87.4 167.8,90.2 157.2,90.9" fill="#cf8f58" opacity="0.8"/><polygon points="96.9,105.5 122.1,101.1 150.2,97.2 178.3,92.3 200.0,87.4 203.6,86.6 203.6,94.6 200.0,95.4 178.3,99.8 157.2,102.6 136.2,105.1 115.1,106.7 98.3,107.2" fill="url(#p1shadow)"/><polygon points="90.9,107.0 92.5,97.3 98.9,78.0 106.5,54.4 110.8,45.8 118.8,44.8 127.9,47.4 128.7,37.2 133.3,22.8 140.3,19.5 147.8,18.1 152.6,23.3 155.8,29.9 161.7,30.6 166.0,22.2 167.6,20.9 170.9,27.4 174.6,27.8 178.4,22.2 182.7,20.4 188.0,25.4 191.8,28.1 195.5,27.0 197.1,10.4 200.4,3.4 202.0,3.4 202.0,79.1 189.6,81.2 178.9,83.4 167.1,74.8 157.4,75.9 144.6,83.4 129.5,93.0 113.4,100.6 98.4,106.5" fill="url(#p1rock)"/><polygon points="167.1,63.5 170.6,53.7 173.4,43.2 176.9,34.0 179.7,24.2 185.3,21.4 189.6,28.4 192.4,32.6 195.9,28.4 200.0,27.0 203.6,27.0 203.6,83.2 200.0,81.8 192.4,80.4 185.3,81.8 178.3,82.5 171.3,83.2 166.4,68.5" fill="#8e4d2e"/><polygon points="170.6,53.7 178.3,48.1 183.9,50.2 182.5,56.5 176.9,59.3 168.5,60.7" fill="#5b2d1c" opacity="0.85"/><polygon points="178.3,64.9 186.7,53.7 192.4,46.7 200.0,43.9 203.6,43.2 203.6,69.2 200.0,73.4 192.4,77.6 183.9,80.4 176.9,81.8 173.4,76.2" fill="#a55f37" opacity="0.7"/><polygon points="192.4,59.3 200.0,53.7 203.6,53.0 203.6,64.9 200.0,66.3 195.2,67.8" fill="#6a3a26" opacity="0.7"/><polygon points="195.2,21.4 196.6,15.8 203.6,14.4 203.6,36.9 200.0,35.4 195.9,34.0" fill="#7a3e26"/><polygon points="72.1,102.9 81.2,86.6 87.1,58.7 93.0,43.7 101.6,36.4 107.5,36.2 112.4,43.7 107.5,54.4 100.0,78.0 93.6,97.3 91.4,104.0" fill="#6b3320"/><polygon points="72.1,102.9 81.2,86.6 87.1,58.7 93.0,43.7 97.9,39.9 92.5,65.1 87.1,86.6 82.5,101.8" fill="#874329"/><polygon points="59.2,35.1 66.8,37.2 65.7,40.5 65.1,43.7 66.8,54.4 69.4,67.3 71.0,81.2 70.0,97.3 71.6,104.3 69.4,107.9 40.5,108.3 38.8,103.8 45.8,95.2 54.4,83.4 57.6,69.4 59.2,54.4 60.3,41.5" fill="#65301e"/><polygon points="59.2,35.1 63.2,36.2 62.7,54.4 60.0,75.9 52.5,93.0 40.7,103.8 38.8,103.8 45.8,95.2 54.4,83.4 57.6,69.4 59.2,54.4 60.3,41.5" fill="#874328"/><polygon points="0.0,106.5 6.1,105.4 17.9,104.4 26.5,105.1 37.2,105.9 37.2,108.3 0.0,108.3" fill="#7a4632"/></g></g>
<g transform="translate(763,600)" clip-path="url(#cph2)"><rect width="200" height="128" fill="url(#p2sky)"/><g filter="url(#bl2)"><ellipse cx="22" cy="52" rx="30" ry="22" fill="#d3e6e0" opacity="0.85"/><ellipse cx="48" cy="28" rx="34" ry="10" fill="#b2d2d0" opacity="0.7"/><ellipse cx="125" cy="22" rx="36" ry="8" fill="#a9cdcd" opacity="0.6"/><ellipse cx="184" cy="10" rx="20" ry="8" fill="#c8dedb" opacity="0.75"/><ellipse cx="10" cy="85" rx="14" ry="12" fill="#d8e8e2" opacity="0.8"/></g><g filter="url(#bl1)"><polygon points="163.9,65.9 167.8,63.4 174.6,62.4 180.5,66.8 190.2,69.8 202.0,70.7 202.0,88.3 163.9,88.3" fill="#a29896"/><polygon points="-2.0,84.4 2.0,78.5 5.9,73.7 11.7,72.7 13.7,67.8 16.6,67.8 19.5,70.7 24.4,65.9 31.2,62.0 39.0,64.4 42.9,62.9 51.7,56.6 58.5,57.1 63.4,51.2 68.3,46.3 74.1,39.0 78.0,40.5 81.0,36.1 87.8,34.1 91.7,33.7 94.6,29.8 98.5,28.8 101.5,30.7 107.3,35.6 113.2,38.5 118.0,40.5 119.0,31.7 125.9,30.2 127.8,25.4 132.7,24.1 137.6,25.9 141.5,29.8 143.4,34.6 148.3,41.5 151.7,45.4 154.1,50.2 160.0,57.1 165.9,62.9 172.7,68.8 176.6,75.6 181.5,78.5 191.2,81.0 202.0,84.4 202.0,94.1 -2.0,94.1" fill="url(#p2mt)"/><polygon points="83.9,48.3 90.7,52.2 97.6,62.0 103.4,70.7 96.6,70.7 90.7,62.0 85.9,55.1" fill="#a55d3c" opacity="0.75"/><polygon points="62.4,53.2 68.3,49.3 71.2,59.0 68.3,68.8 62.4,70.7 64.4,61.0" fill="#a55d3c" opacity="0.75"/><polygon points="143.4,35.6 148.3,41.5 151.7,45.4 154.1,50.2 160.0,57.1 165.9,62.9 160.0,62.9 152.2,55.1 146.3,45.4" fill="#a55d3c" opacity="0.75"/><polygon points="39.0,64.9 42.9,63.4 42.0,74.6 39.0,82.4 36.1,78.5" fill="#a55d3c" opacity="0.75"/><polygon points="13.7,68.3 16.6,68.3 19.5,71.2 19.0,80.5 14.6,81.5" fill="#a55d3c" opacity="0.75"/><polygon points="101.5,44.4 105.4,42.4 107.3,52.2 105.4,63.9 101.5,65.9" fill="#a55d3c" opacity="0.75"/><polygon points="115.1,52.2 120.0,49.3 121.0,61.0 117.1,68.8 114.1,62.9" fill="#a55d3c" opacity="0.75"/><polygon points="129.8,27.8 132.7,25.9 134.6,35.6 131.7,45.4 128.8,37.6" fill="#a55d3c" opacity="0.75"/><polygon points="74.1,39.5 78.0,41.0 77.1,49.3 73.2,53.2" fill="#a55d3c" opacity="0.75"/><polygon points="87.8,34.6 94.6,30.2 98.5,29.3 97.6,44.4 91.7,52.2 87.8,45.4" fill="#f0b286" opacity="0.7"/><polygon points="119.5,32.2 125.9,30.7 127.8,25.9 129.8,27.8 127.8,45.4 122.0,49.3 119.0,42.4" fill="#f0b286" opacity="0.7"/><polygon points="52.7,57.6 58.5,57.6 57.6,70.7 52.7,74.6 48.8,66.8" fill="#f0b286" opacity="0.7"/><polygon points="25.4,66.3 31.2,62.5 34.1,65.9 32.2,78.5 26.3,80.5" fill="#f0b286" opacity="0.7"/><polygon points="134.6,45.4 142.4,43.4 148.3,57.1 144.4,65.9 136.6,62.9" fill="#f0b286" opacity="0.7"/><polygon points="68.3,72.2 87.8,70.7 107.3,69.3 122.0,65.9 131.7,66.8 122.0,70.7 107.3,73.2 87.8,74.6 70.2,74.6" fill="#f0b88c" opacity="0.8"/><polygon points="37.1,84.4 50.7,78.5 68.3,73.7 87.8,74.1 97.6,75.6 90.7,78.5 82.0,83.4 76.1,90.2 58.5,88.3" fill="#d4784a"/><polygon points="117.1,73.2 124.9,67.8 136.6,65.9 148.3,68.8 160.0,78.5 158.0,85.4 152.2,87.3 136.6,80.5 124.9,74.6" fill="#c77a5e"/><polygon points="191.2,81.0 202.0,84.4 202.0,88.3 195.1,85.4" fill="#d98757"/><polygon points="74.1,91.7 82.0,82.4 90.7,77.1 97.6,76.6 107.3,75.6 117.1,73.2 124.9,74.6 136.6,80.5 152.2,87.3 158.0,84.4 165.9,78.5 175.6,77.6 185.4,80.5 202.0,87.3 202.0,130.2 68.3,130.2 68.3,94.1" fill="#8f7c74"/><polygon points="76.1,90.4 82.0,82.6 90.7,77.4 95.6,82.4 91.7,88.3 83.9,91.7" fill="#b3a9a4"/><polygon points="156.1,88.3 165.9,79.5 175.6,78.0 185.4,81.5 183.4,94.1 175.6,107.8 165.9,117.6 156.1,119.5 154.1,103.9" fill="#9d8a82"/><polygon points="112.2,88.3 126.8,87.3 141.5,94.1 146.3,107.8 136.6,111.7 122.0,103.9 112.2,97.1" fill="#a48679" opacity="0.8"/><polygon points="92.7,77.8 107.3,75.8 117.1,73.5 124.9,75.1 136.6,81.0 144.4,87.3 131.7,84.4 117.1,80.5 102.4,82.4 95.6,82.4" fill="#6d6549" opacity="0.85"/><polygon points="161.0,83.4 170.7,78.5 180.5,79.5 175.6,83.4 165.9,87.3" fill="#6d6549" opacity="0.7"/><polygon points="-2.0,84.9 12.7,82.4 29.3,86.3 48.8,87.3 68.3,88.3 76.1,90.7 87.8,93.2 102.4,97.1 117.1,102.9 131.7,109.8 141.5,116.6 146.3,130.2 -2.0,130.2" fill="url(#p2for)"/><polygon points="50.7,94.1 62.4,92.7 70.2,95.1 62.4,98.0 52.7,97.1" fill="#7a4d3b" opacity="0.7"/><polygon points="145.4,130.2 152.2,119.5 161.0,113.7 169.8,103.9 178.5,95.1 187.3,92.2 202.0,94.6 202.0,101.5 191.2,97.1 183.4,101.0 175.6,109.8 167.8,117.6 160.0,130.2" fill="#3b3b31"/><polygon points="165.9,130.2 175.6,119.5 185.4,113.7 202.0,107.8 202.0,130.2" fill="#4a453b"/><polygon points="107.3,107.8 117.1,103.9 131.7,110.7 141.5,117.6 145.4,130.2 126.8,130.2 117.1,117.6" fill="#54483f" opacity="0.8"/></g></g>
<g transform="translate(1020,600)" clip-path="url(#cph3)"><rect width="200" height="128" fill="url(#p3sky)"/><g filter="url(#bl1)"><polygon points="-2.0,66.4 4.4,67.4 6.8,73.8 14.6,70.3 19.5,73.3 22.4,71.3 26.3,73.3 39.0,69.9 45.9,70.8 51.7,75.7 56.1,73.3 59.5,76.2 64.4,70.3 68.3,69.9 71.7,74.7 74.1,70.3 77.1,75.7 81.0,74.7 84.9,69.9 90.7,65.0 97.6,65.5 104.4,63.8 108.3,61.9 117.1,63.8 122.0,66.0 126.8,72.3 129.8,71.8 133.7,73.8 136.6,71.3 146.3,71.8 152.2,75.2 156.1,74.7 165.9,75.7 171.7,72.8 180.5,69.4 185.4,68.4 193.2,69.9 202.0,70.8 202.0,130.3 -2.0,130.3" fill="#a3948f"/><polygon points="0.0,75.7 6.8,73.8 11.7,77.7 19.5,79.6 17.6,86.4 5.9,88.4 0.0,89.4" fill="#6f7f98"/><polygon points="51.7,75.7 56.1,73.3 59.5,76.2 64.4,70.3 68.3,69.9 71.7,74.7 74.1,70.3 77.1,75.7 81.0,74.7 82.9,84.5 87.8,89.4 74.1,90.8 63.4,88.4 54.6,83.5" fill="#7a8092"/><polygon points="152.2,75.7 165.9,76.2 163.9,80.6 156.1,83.5 150.2,80.6" fill="#7f8799"/><polygon points="81.0,74.7 84.9,69.9 90.7,65.0 97.6,65.5 104.4,63.8 108.3,61.9 117.1,63.8 122.0,66.0 126.8,72.3 125.9,77.7 117.1,83.5 107.3,85.0 97.6,85.0 91.7,86.9 87.8,83.5 82.9,84.5" fill="#9d8c88"/><polygon points="101.5,70.8 106.3,66.9 110.2,68.4 106.3,72.8" fill="#e6ebf1"/><polygon points="136.6,71.6 146.3,72.0 150.2,77.7 144.4,79.6 134.6,77.7 131.7,73.8" fill="#a89690"/><polygon points="171.7,73.0 180.5,69.5 185.4,68.5 193.2,70.0 202.0,71.0 202.0,82.5 190.2,81.6 185.4,78.6 175.6,77.7" fill="#a5938f"/><polygon points="7.3,73.8 14.6,70.2 20.0,73.0 18.0,76.2 11.7,76.2 8.8,77.2" fill="#eef2f6"/><polygon points="26.3,73.8 39.0,69.7 45.9,70.6 51.7,75.7 54.6,83.5 58.5,89.4 67.3,94.2 67.3,100.6 58.5,101.6 52.7,96.7 41.0,93.3 32.2,88.9 24.4,90.8 15.6,89.9 5.9,92.8 -2.0,93.8 -2.0,88.9 9.8,87.4 19.5,85.0 29.3,81.1" fill="#edf1f6"/><polygon points="33.2,78.6 39.0,75.7 45.9,78.6 50.7,86.4 54.6,92.3 46.8,90.3 41.0,86.4 35.1,83.5" fill="#b9b3b6" opacity="0.85"/><polygon points="19.5,73.8 22.9,71.6 26.3,73.6 29.3,81.1 25.4,84.5 19.5,82.5 17.6,77.7" fill="#a89892"/><polygon points="124.9,78.6 136.6,80.6 152.2,83.5 165.9,81.6 185.4,82.5 202.0,83.5 202.0,86.6 175.6,86.1 146.3,87.1 122.0,85.2 97.6,85.2 107.3,82.7" fill="#eef1f5"/><polygon points="97.6,85.2 122.0,85.2 146.3,87.1 175.6,86.1 202.0,86.6 202.0,89.6 175.6,88.6 146.3,89.6 126.8,89.9 107.3,88.4 97.6,87.9" fill="#b3a6a3"/><polygon points="54.6,86.4 63.4,88.4 74.1,90.3 87.8,89.6 97.6,87.6 107.3,88.1 126.8,89.6 146.3,89.2 165.9,88.6 175.6,87.6 202.0,88.6 202.0,100.6 190.2,103.5 180.5,110.3 170.7,112.3 161.0,108.4 156.1,103.5 146.3,101.6 136.6,100.6 126.8,98.6 107.3,96.7 97.6,97.7 89.8,101.6 82.9,107.4 74.1,108.4 70.2,103.5 67.3,99.6 67.3,94.2 58.5,89.4" fill="#eff2f6"/><polygon points="58.5,84.0 72.2,86.9 80.0,90.5 91.2,92.5 88.3,96.7 81.5,103.5 74.6,106.1 68.8,96.7 61.0,90.5" fill="#c2cddd"/><polygon points="161.0,93.3 174.1,88.2 176.1,93.3 166.3,103.0 158.5,108.1 152.2,105.0" fill="#7489a6"/><polygon points="107.3,96.7 126.8,98.6 136.6,100.6 146.3,101.6 141.5,97.2 126.8,95.2 112.2,93.3 103.4,94.2" fill="#cfd8e4"/><polygon points="-2.0,97.2 9.8,95.0 29.3,94.0 42.0,95.5 54.6,101.1 63.4,108.1 58.5,115.2 46.8,119.1 24.4,122.0 -2.0,123.0" fill="#85776f"/><polygon points="-2.0,97.2 5.9,95.7 7.8,105.0 3.9,114.7 -2.0,118.6" fill="#5a6a82"/><polygon points="29.3,95.2 37.1,95.0 41.0,105.0 37.1,116.7 32.2,118.6 33.2,106.0" fill="#6c6a74" opacity="0.8"/><polygon points="15.6,97.2 19.5,96.7 20.5,107.9 18.5,118.6 14.6,119.6 16.1,107.9" fill="#75707a" opacity="0.7"/><polygon points="-2.0,122.5 24.4,121.4 46.8,118.4 58.5,114.5 63.4,107.7 68.3,109.9 74.1,108.1 82.9,107.1 89.8,101.3 97.6,97.4 107.3,96.4 126.8,98.3 136.6,100.3 146.3,101.3 156.1,103.2 161.0,108.1 170.7,112.0 180.5,110.0 190.2,103.2 202.0,100.3 202.0,130.3 -2.0,130.3" fill="url(#p3low)"/><polygon points="82.9,107.1 90.7,103.2 97.6,105.2 107.3,111.0 117.1,116.9 122.9,122.7 126.8,130.3 54.6,130.3 60.5,122.7 68.3,114.9 76.1,110.0" fill="#4f627b"/><polygon points="90.7,103.2 94.1,109.1 98.0,114.9 103.4,122.5 107.3,130.3 101.5,130.3 96.6,122.5 92.7,114.9 88.3,108.1" fill="#8fa0b6" opacity="0.85"/><polygon points="72.2,111.0 78.0,109.1 68.3,118.8 58.5,126.6 54.6,130.3 52.7,128.4 60.5,122.7" fill="#8596ad" opacity="0.8"/><polygon points="97.6,110.8 107.3,112.8 117.1,118.6 122.0,124.5 112.2,122.5 102.4,116.7" fill="#6f7c8e" opacity="0.8"/><polygon points="136.6,114.0 151.2,108.1 161.0,108.4 170.7,112.3 180.5,110.3 195.1,103.2 202.0,101.6 202.0,105.5 185.4,111.0 175.6,113.0 165.9,112.0 156.1,110.0 144.4,114.9" fill="#e6ebf2"/><polygon points="134.6,118.6 141.5,116.7 152.2,114.7 156.1,115.7 146.3,118.6 136.6,121.1" fill="#c8d2de" opacity="0.8"/><polygon points="117.1,105.0 126.8,102.0 134.6,105.0 126.8,109.9 119.0,110.8" fill="#3f6285" opacity="0.9"/></g></g>
</svg>
<div id="tx" style="position:absolute;left:0;top:0;width:2050px;height:1538px;will-change:transform">
<div class="t" id="tab1" style="top:27.68px;font-size:24px;color:#1a1a1a;letter-spacing:0.892px;-webkit-text-stroke:0.7px #1a1a1a;left:79.57px;">Documents</div>
<div class="t" id="tab2" style="top:28.68px;font-size:24px;color:#5e5e5e;letter-spacing:0.462px;left:559.06px;">Home</div>
<div class="t" id="addr" style="top:108.16px;font-size:28.4px;color:#1a1a1a;letter-spacing:-0.194px;left:351.09px;">Documents</div>
<div class="t" id="search" style="top:108.16px;font-size:28.4px;color:#5e5e5e;letter-spacing:-1.207px;left:1583.38px;">Search</div>
<div class="t" id="st1" style="top:1485.16px;font-size:28.4px;color:#5e5e5e;letter-spacing:-0.579px;left:487.25px;">17 items</div>
<div class="t" id="st2" style="top:1485.16px;font-size:28.4px;color:#5e5e5e;letter-spacing:-0.412px;left:629.81px;">1 item selected</div>
<div class="t" id="sb_home" style="top:202.16px;font-size:28.4px;color:#1b1b1b;letter-spacing:0.124px;left:97.38px;">Home</div>
<div class="t" id="h_pinned" style="top:297.68px;font-size:24px;color:#8a8a8a;letter-spacing:0.779px;-webkit-text-stroke:0.55px #8a8a8a;left:41.88px;">Pinned</div>
<div class="t" id="sb_desktop" style="top:362.16px;font-size:28.4px;color:#1b1b1b;letter-spacing:-0.127px;left:97.38px;">Desktop</div>
<div class="t" id="sb_downloads" style="top:426.16px;font-size:28.4px;color:#1b1b1b;letter-spacing:-0.174px;left:97.38px;">Downloads</div>
<div class="t" id="sb_documents" style="top:490.16px;font-size:28.4px;color:#1b1b1b;letter-spacing:-0.222px;left:97.38px;">Documents</div>
<div class="t" id="sb_music" style="top:554.16px;font-size:28.4px;color:#1b1b1b;letter-spacing:-0.112px;left:97.38px;">Music</div>
<div class="t" id="sb_recycle" style="top:618.16px;font-size:28.4px;color:#1b1b1b;letter-spacing:-1.116px;left:97.61px;">Recycle Bin</div>
<div class="t" id="h_drives" style="top:713.68px;font-size:24px;color:#8a8a8a;letter-spacing:0.495px;-webkit-text-stroke:0.55px #8a8a8a;left:41.88px;">Drives</div>
<div class="t" id="sb_win" style="top:778.16px;font-size:28.4px;color:#1b1b1b;letter-spacing:-0.775px;left:98.23px;">Windows (C:)</div>
<div class="t" id="sb_dvd" style="top:842.16px;font-size:28.4px;color:#1b1b1b;letter-spacing:-1.095px;left:97.38px;">DVD Rom (D:)</div>
<div class="t" id="sb_proj" style="top:908.16px;font-size:28.4px;color:#1b1b1b;letter-spacing:-0.929px;left:97.38px;">Projects (P:)</div>
<div class="t" id="h_cloud" style="top:1005.68px;font-size:24px;color:#8a8a8a;letter-spacing:0.579px;-webkit-text-stroke:0.55px #8a8a8a;left:41.83px;">Cloud Storage</div>
<div class="t" id="sb_onedrive" style="top:1070.16px;font-size:28.4px;color:#1b1b1b;letter-spacing:-0.435px;left:97.45px;">OneDrive</div>
<div class="t" id="sb_icloud" style="top:1134.16px;font-size:28.4px;color:#1b1b1b;letter-spacing:0.064px;left:97.62px;">iCloud</div>
<div class="t" id="sb_gdrive" style="top:1198.16px;font-size:28.4px;color:#1b1b1b;letter-spacing:-0.265px;left:97.54px;">Google Drive</div>
<div class="t" id="h_network" style="top:1293.68px;font-size:24px;color:#8a8a8a;letter-spacing:1.448px;-webkit-text-stroke:0.55px #8a8a8a;left:41.88px;">Network</div>
<div class="t" id="h_wsl" style="top:1357.68px;font-size:24px;color:#8a8a8a;letter-spacing:-1.701px;-webkit-text-stroke:0.55px #8a8a8a;left:42.57px;">WSL</div>
<div class="t" id="h_tags" style="top:1421.68px;font-size:24px;color:#8a8a8a;letter-spacing:-0.521px;-webkit-text-stroke:0.55px #8a8a8a;left:42.49px;">Tags</div>
<div class="t" id="sb_taghome" style="top:1486.16px;font-size:28.4px;color:#1b1b1b;letter-spacing:0.037px;left:97.38px;">Home</div>
<div class="t" id="tb_new" style="top:205.68px;font-size:24px;color:#1a1a1a;letter-spacing:-0.281px;left:547.64px;">New</div>
<div class="t" id="f1_0" style="top:502.16px;font-size:28.4px;color:#1b1b1b;letter-spacing:0.088px;left:564.85px;">Adobe</div>
<div class="t" id="f1_1" style="top:502.16px;font-size:28.4px;color:#1b1b1b;letter-spacing:-0.370px;left:819.94px;">Design</div>
<div class="t" id="f1_2" style="top:502.16px;font-size:28.4px;color:#1b1b1b;letter-spacing:-0.764px;left:1085.61px;">Fonts</div>
<div class="t" id="f1_3" style="top:502.16px;font-size:28.4px;color:#1b1b1b;letter-spacing:-0.697px;left:1302.94px;">Project Files</div>
<div class="t" id="f1_4" style="top:502.16px;font-size:28.4px;color:#1b1b1b;letter-spacing:-0.666px;left:1568.83px;">Templates</div>
<div class="t" id="f1_5" style="top:502.16px;font-size:28.4px;color:#1b1b1b;letter-spacing:-0.508px;left:1811.46px;">Visual Studio</div>
<div class="t" id="f2_0" style="top:766.16px;font-size:28.4px;color:#1b1b1b;letter-spacing:-1.200px;left:510.16px;">IMG_2022_06...</div>
<div class="t" id="f2_1" style="top:766.16px;font-size:28.4px;color:#1b1b1b;letter-spacing:-1.177px;left:766.81px;">IMG_2022_06...</div>
<div class="t" id="f2_2" style="top:766.16px;font-size:28.4px;color:#1b1b1b;letter-spacing:-1.194px;left:1024.06px;">IMG_2022_06...</div>
<div class="t" id="f2_3" style="top:766.16px;font-size:28.4px;color:#1b1b1b;letter-spacing:-0.638px;left:1282.73px;">New Text Doc...</div>
<div class="t" id="f2_4" style="top:766.16px;font-size:28.4px;color:#1b1b1b;letter-spacing:-0.134px;left:1527.14px;">Untitled Docum...</div>
<div class="t" id="f2_5" style="top:766.16px;font-size:28.4px;color:#1b1b1b;letter-spacing:-0.403px;left:1781.73px;">History of Skate...</div>
<div class="t" id="f3_0" style="top:1030.16px;font-size:28.4px;color:#1b1b1b;letter-spacing:-0.457px;left:545.57px;">license.txt</div>
<div class="t" id="f3_1" style="top:1030.16px;font-size:28.4px;color:#1b1b1b;letter-spacing:-1.316px;left:770.12px;">Focus Sessions</div>
<div class="t" id="f3_2" style="top:1030.16px;font-size:28.4px;color:#1b1b1b;letter-spacing:-0.489px;left:1007.14px;">Untitled Spreads...</div>
<div class="t" id="f3_3" style="top:1030.16px;font-size:28.4px;color:#1b1b1b;letter-spacing:-0.257px;left:1315.03px;">After Dark</div>
<div class="t" id="f3_4" style="top:1030.16px;font-size:28.4px;color:#1b1b1b;letter-spacing:-0.096px;left:1540.92px;">poppins-regu...</div>
</div>
</body></html>
